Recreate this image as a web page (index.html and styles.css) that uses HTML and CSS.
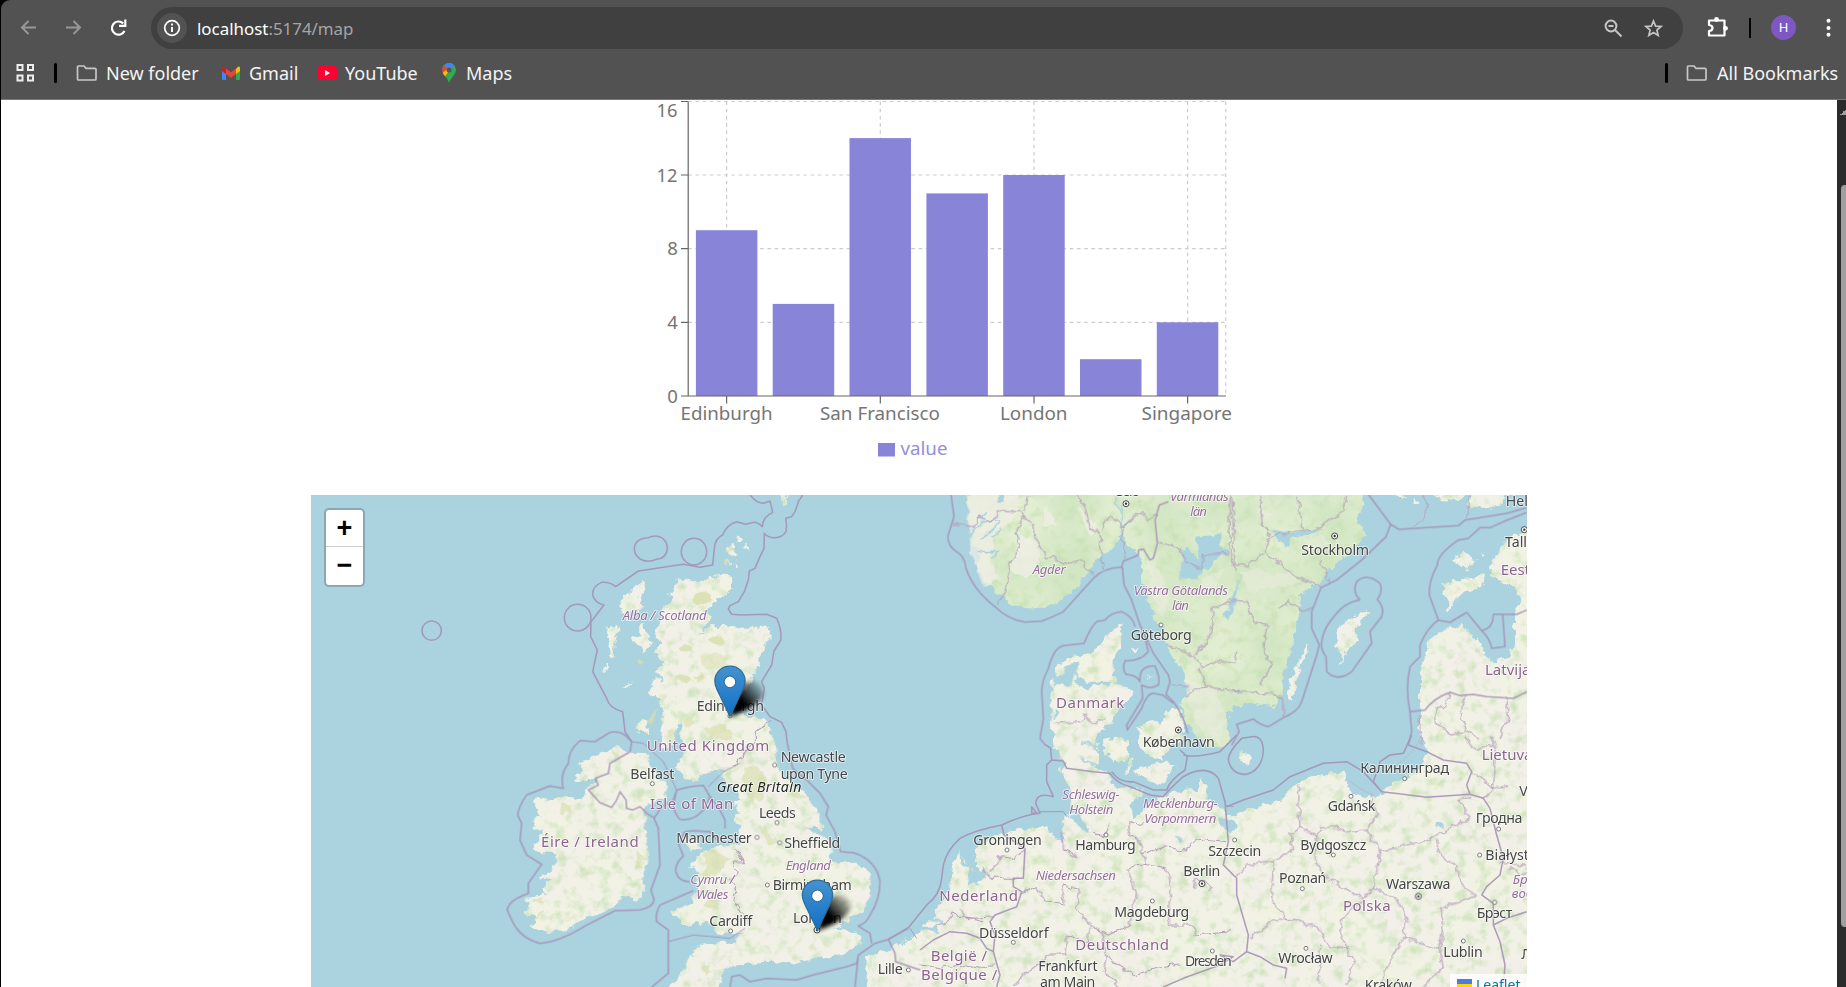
FILE: index.html
```html
<!DOCTYPE html>
<html lang="en">
<head>
<meta charset="utf-8">
<title>localhost:5174/map</title>
<link rel="stylesheet" href="styles.css">
</head>
<body>
<header class="browser">
  <div class="toolbar">
    <svg class="nav-icons" width="150" height="56" viewBox="1 0 150 56" fill="none" stroke-width="2">
      <g stroke="#979797"><path d="M36 27.500H22M28.500 21L22 27.500l6.500 6.500"/><path d="M66 27.500h14M73.500 21L80 27.500l-6.500 6.500"/></g>
      <path d="M124.500 31a6.600 6.600 0 1 1-1.300-7.600M125.300 19.500v6.300H119" stroke="#fff" stroke-width="2.200"/>
    </svg>
    <div class="omnibox">
      <span class="info"><svg width="30" height="30" viewBox="0 0 30 30"><circle cx="15" cy="15" r="7.300" fill="none" stroke="#fff" stroke-width="1.700"/><path d="M15 14v5M15 10.500v2" stroke="#fff" stroke-width="1.900"/></svg></span>
      <span class="url"><b>localhost</b>:5174/map</span>
      <svg class="omni-icons" width="60" height="30" viewBox="1604 13 60 30" fill="none" stroke="#c4c4c4" stroke-width="2">
        <circle cx="1611" cy="26" r="5.400"/><path d="M1615 30l6.500 6.500M1608.500 26h5" />
        <path stroke-width="1.700" d="M1653.500 21l2.100 5.100 5.500.4-4.200 3.600 1.300 5.400-4.700-2.900-4.700 2.900 1.300-5.400-4.200-3.600 5.500-.4z"/>
      </svg>
    </div>
    <svg class="tool-icons" width="163" height="56" viewBox="1683 0 163 56">
      <path d="M1709 20.500h15.500v15h-15.500v-4.500q3.500-.3 3.500-3t-3.500-3z" fill="none" stroke="#fff" stroke-width="2.200" stroke-linejoin="round"/>
      <circle cx="1716.500" cy="19.500" r="2.400" fill="#fff"/><circle cx="1725.500" cy="28.300" r="2.400" fill="#fff"/>
      <path d="M1750 18v20" stroke="#000" stroke-width="2"/>
      <circle cx="1783.500" cy="27.500" r="12.500" fill="#7e57c2"/>
      <text x="1783.500" y="32.300" text-anchor="middle" class="avatar">H</text>
      <g fill="#fff"><circle cx="1828.500" cy="20.700" r="2"/><circle cx="1828.500" cy="28" r="2"/><circle cx="1828.500" cy="34.800" r="2"/></g>
    </svg>
  </div>
  <nav class="bookmarks">
    <svg class="apps" width="20" height="20" viewBox="0 0 20 20" fill="none" stroke="#eee" stroke-width="2"><path d="M2.500 2h5v5h-5zM13 2h5v5h-5zM2.500 12.500h5v5h-5zM13 12.500h5v5h-5z"/></svg>
    <i class="divider"></i>
    <span class="mark folder"><svg width="22" height="18" viewBox="0 0 22 18"><path d="M1.500 15V3q0-1 1-1H8l2 2.300h9q1 0 1 1V15q0 1-1 1H2.500q-1 0-1-1z" fill="none" stroke="#c7c7c7" stroke-width="1.700"/></svg>New folder</span>
    <span class="mark gmail"><svg width="18" height="14" viewBox="0 0 18 14"><path d="M0 3h4v11H1.200Q0 14 0 12.800z" fill="#4285f4"/><path d="M14 3h4v9.800q0 1.200-1.200 1.200H14z" fill="#34a853"/><path d="M14 3l2-2.300q2-.9 2 1.300v3l-4 3z" fill="#fbbc04"/><path d="M4 2.500L9 6.300l5-3.800V8l-5 3.800L4 8z" fill="#ea4335"/><path d="M0 2Q0-.2 2 .7l2 1.800V8L0 5z" fill="#c5221f"/></svg>Gmail</span>
    <span class="mark youtube"><svg width="20" height="14" viewBox="0 0 20 14"><rect width="20" height="14" rx="3.500" fill="#ff0033"/><path d="M8 4l5 3-5 3z" fill="#fff"/></svg>YouTube</span>
    <span class="mark maps"><svg width="14" height="20" viewBox="0 0 14 20"><path d="M7 0a7 7 0 0 1 7 7q0 3-3 6.500T7 20q-1-4-4-7T0 7a7 7 0 0 1 7-7z" fill="#34a853"/><path d="M1.500 2.700A7 7 0 0 1 12.300 2.500L8 6z" fill="#4285f4"/><path d="M1.500 2.700L6 6 .8 10Q-.9 6 1.500 2.700z" fill="#ea4335"/><path d="M.8 10L6 5l5-2.500L3.200 13.200Q1.600 12 .8 10z" fill="#fbbc04"/><path d="M4 3.500L7 0q3 0 5.300 2.500L9 6z" fill="#4285f4"/><circle cx="7" cy="7" r="2.500" fill="#555"/></svg>Maps</span>
    <i class="divider end"></i>
    <span class="mark all"><svg width="22" height="18" viewBox="0 0 22 18"><path d="M1.500 15V3q0-1 1-1H8l2 2.300h9q1 0 1 1V15q0 1-1 1H2.500q-1 0-1-1z" fill="none" stroke="#c7c7c7" stroke-width="1.700"/></svg>All Bookmarks</span>
  </nav>
</header>
<div class="viewport">
<main class="page">
  <svg class="chart" width="620" height="395" viewBox="640 100 620 395">
    <g class="grid">
      <path d="M688.200 322.300H1226M688.200 248.600H1226M688.200 175H1226M688.200 101.500H1226"/>
      <path d="M726.600 101.500V396M880.300 101.500V396M1034 101.500V396M1187.600 101.500V396M1225.700 101.500V396"/>
    </g>
    <g fill="#8884d8">
      <rect x="695.900" y="230.200" width="61.500" height="165.800"/>
      <rect x="772.700" y="303.900" width="61.500" height="92.100"/>
      <rect x="849.500" y="138.100" width="61.500" height="257.900"/>
      <rect x="926.400" y="193.400" width="61.500" height="202.600"/>
      <rect x="1003.200" y="175" width="61.500" height="221"/>
      <rect x="1080" y="359.200" width="61.500" height="36.800"/>
      <rect x="1156.800" y="322.300" width="61.500" height="73.700"/>
    </g>
    <path class="axis" d="M688.200 101.500V396H1226M681 101.500h7M681 175h7M681 248.600h7M681 322.300h7M681 396h7M726.600 396v7.500M880.300 396v7.500M1034 396v7.500M1187.600 396v7.500"/>
    <g class="tick">
      <text x="656.500" y="116.700" textLength="21" lengthAdjust="spacingAndGlyphs">16</text><text x="656.500" y="181.700" textLength="21" lengthAdjust="spacingAndGlyphs">12</text><text x="667.300" y="255.300">8</text><text x="667.300" y="329.300">4</text><text x="667.300" y="402.700">0</text>
      <text x="680.500" y="419.700" textLength="92" lengthAdjust="spacingAndGlyphs">Edinburgh</text>
      <text x="820" y="419.700" textLength="120" lengthAdjust="spacingAndGlyphs">San Francisco</text>
      <text x="1000" y="419.700" textLength="67.500" lengthAdjust="spacingAndGlyphs">London</text>
      <text x="1141.500" y="419.700" textLength="90.500" lengthAdjust="spacingAndGlyphs">Singapore</text>
    </g>
    <rect x="878" y="443" width="17" height="13.500" fill="#8884d8"/>
    <text class="legend" x="900.500" y="454.700" textLength="47" lengthAdjust="spacingAndGlyphs">value</text>
  </svg>
  <section class="map">
  <svg class="tiles" width="1216" height="492" viewBox="311 495 1216 492">
    <defs>
      <filter id="terrain" filterUnits="userSpaceOnUse" x="311" y="480" width="1216" height="520" color-interpolation-filters="sRGB">
        <feTurbulence type="fractalNoise" baseFrequency=".13" numOctaves="3" seed="4" result="n"/>
        <feDisplacementMap in="SourceGraphic" in2="n" scale="9" xChannelSelector="R" yChannelSelector="G" result="land"/>
        <feTurbulence type="fractalNoise" baseFrequency=".09" numOctaves="5" seed="11"/>
        <feColorMatrix values="0 0 0 0 .78  0 0 0 0 .88  0 0 0 0 .70  0 3 0 0 -1.450" result="g"/>
        <feComposite in="g" in2="land" operator="in" result="green"/>
        <feTurbulence type="fractalNoise" baseFrequency=".02" numOctaves="2" seed="5"/>
        <feColorMatrix values="0 0 0 0 .94  0 0 0 0 .96  0 0 0 0 .87  0 2 0 0 -.500" result="w"/>
        <feComposite in="w" in2="land" operator="in" result="wash"/>
        <feComponentTransfer in="wash" result="pale"><feFuncA type="linear" slope=".55"/></feComponentTransfer>
        <feComponentTransfer in="green" result="tint"><feFuncA type="linear" slope=".75"/></feComponentTransfer>
        <feMerge><feMergeNode in="land"/><feMergeNode in="pale"/><feMergeNode in="tint"/></feMerge>
      </filter>
      <filter id="rough" filterUnits="userSpaceOnUse" x="311" y="480" width="1216" height="520">
        <feTurbulence type="fractalNoise" baseFrequency=".12" numOctaves="2" seed="8"/>
        <feDisplacementMap in="SourceGraphic" scale="8" xChannelSelector="R" yChannelSelector="G"/>
      </filter>
      <filter id="shade" x="-50%" y="-50%" width="200%" height="200%"><feGaussianBlur stdDeviation="2"/></filter>
      <linearGradient id="pinfill" x1="0" y1="0" x2="0" y2="1"><stop offset="0" stop-color="#4593cf"/><stop offset="1" stop-color="#126fc6"/></linearGradient>
      <linearGradient id="shadefill" x1="0" y1="1" x2="1" y2="0"><stop offset=".4" stop-color="#000"/><stop offset=".95" stop-color="#000" stop-opacity=".05"/></linearGradient>
      <g id="pin">
        <path d="M0 0L8-32 22-36Q34-34 33-21Q25-8 0 0z" fill="url(#shadefill)" filter="url(#shade)"/>
        <g transform="translate(-15.800 -51) scale(1.260)"><path d="M12.500.5C5.900.5.500 5.600.500 12.200c0 2 .6 4.600 1.600 6.600L12.500 40.300 22.900 18.800c1-2 1.600-4.600 1.600-6.600C24.500 5.600 19.100.500 12.500.500z" fill="url(#pinfill)" stroke="#2e6c97"/><circle cx="12.500" cy="13" r="4.600" fill="#fff" stroke="#2e6c97" stroke-width=".8"/></g>
      </g>
      <g id="cap"><circle r="9" fill="#fff" stroke="#444" stroke-width="3"/><circle r="3.500" fill="#333"/></g>
      <circle id="town" r="6" fill="#fff" stroke="#666" stroke-width="2.500"/>
    </defs>
    <rect x="311" y="495" width="1216" height="492" fill="#aad3df"/>

    <g filter="url(#terrain)" fill="#f2efe9">
      <g transform="translate(580 485) scale(.33333)">
        <path d="M295 272L310 285 325 283 340 292 385 280 430 268 455 272 460 290 455 310 430 330 410 345 395 360 380 385 395 400 375 425 350 455 385 428 430 420 470 425 555 425 570 440 568 460 550 480 545 510 530 550 515 580 500 610 478 640 450 680 500 692 545 705 565 730 580 750 590 790H330L305 710 290 720 275 790H240L255 740 250 690 262 660 240 640 225 625 250 590 250 575 230 560 250 530 225 500 240 470 225 450 230 420 250 400 235 385 260 365 275 350 265 330 285 310z"/>
        <path d="M190 290L197 305 185 330 175 350 190 370 160 375 140 400 130 380 118 350 140 330 165 310zM85 430L110 420 118 440 105 460 100 515 90 515 92 480 80 440zM85 530L90 545 72 560zM178 425L190 420 195 450 220 470 215 490 190 500 180 480 150 470 160 450 178 455zM215 585L240 580 255 610 240 625 200 630 215 610zM185 700L205 705 205 720 200 745 175 735 170 725zM130 610L160 592 140 612zM435 190L460 180 470 210 450 215zM470 150L485 160 475 168zM435 225L452 235 440 243zM467 225L475 250 465 245zM485 185L502 180 505 195zM612 25H620L612 60 605 55z"/>
      </g>
      <g transform="translate(500 700) scale(.33333)">
        <path d="M560 30L720 45 785 60 805 85 820 110 828 160 832 200 855 235 895 265 920 290 945 320 952 345 970 390 950 385 915 378 945 395 970 410 985 425 993 450 990 475 1000 488 1060 485 1100 505 1113 540 1110 590 1085 630 1060 650 1020 675 1000 685 1040 690 1085 710 1078 735 1040 760 980 770 930 780 860 790 800 785 740 790 690 800 665 820 655 870H500L545 825 575 765 600 735 640 728 700 728 735 690 700 705 650 700 625 665 590 670 550 675 512 635 570 610 600 570 590 540 590 520 600 510 565 500 610 455 650 440 720 430 720 380 705 360 715 330 700 310 725 300 715 280 695 260 670 240 665 215 690 200 640 215 600 225 590 245 545 230 525 200 555 155 545 100zM545 415L590 420 600 445 570 450zM480 0L490 60 480 100 500 112 520 60 550 0z"/>
        <path d="M350 140L385 155 440 160 450 195 495 255 500 290 460 300 430 325 435 360 440 420 440 490 425 540 435 570 420 600 370 590 340 620 290 645 240 660 200 690 140 695 90 680 110 650 75 640 90 615 70 600 100 590 140 585 120 565 160 540 120 535 175 490 170 460 115 455 95 445 130 405 95 370 120 345 105 320 105 290 160 300 190 290 240 300 270 260 290 235 215 240 245 215 235 190 290 165z"/>
      </g>
      <g transform="translate(900 735) scale(.33333)">
        <path d="M-103 770V668L-60 655 0 627 45 600 60 580 100 545 110 520 150 470 155 400 165 370 175 350 200 385 215 410 205 445 235 450 260 430 260 405 230 395 225 350 240 325 290 300 380 280 440 275 455 300 470 310 490 320 485 260 500 240 540 235 515 215 510 160 490 120 495 80 460 30 455 -50 455 -150 470 -200 500 -235 580 -245 620 -300 670 -338 660 -310 660 -260 640 -220 645 -150 695 -140 690 -110 650 -80 640 -40 600 -10 590 15 580 45 600 70 580 100 620 110 640 150 700 165 725 160 715 190 690 215 700 250 740 220 780 190 830 170 890 165 905 130 920 150 915 190 960 215 985 240 1005 240 1050 225 1140 195 1190 150 1230 125 1330 110 1345 140 1340 165 1380 185 1435 185 1485 140 1530 125 1570 80 1580 50 1570 30 1560 -30 1560 -150 1565 -205 1585 -270 1600 -300 1650 -320 1680 -335 1720 -300 1745 -260 1775 -220 1820 -230 1845 -270 1845 -360 1860 -420 1840 -440 1810 -460 1775 -470 1770 -510 1795 -550 1810 -580 1860 -610 1910 -620V770z"/>
        <path d="M610 15L640 0 680 15 685 60 660 85 625 65zM715 -20L760 -50 780 -30 800 -70 835 -80 850 -50 855 -10 845 10 815 30 800 50 790 75 740 60 720 30zM700 105L760 90 800 80 830 90 780 150 700 115zM675 110L690 70 697 75 682 125zM1020 45L1055 65 1050 90 1018 75zM695 -258L715 -262 700 -245zM742 -178L760 -175 745 -165zM475 90L485 115 475 110zM560 40L580 30 600 50 590 30z"/>
      </g>
      <g transform="translate(1220 485) scale(.33333)">
        <path d="M260 478L262 500 240 540 215 650 203 640 210 590zM350 430L400 395 450 375 430 400 405 430 410 465 380 500 355 545 365 510 350 480zM670 300L700 285 760 280 795 265 790 300 740 320 700 350 685 385 685 340 668 325zM700 225L730 200 770 225 740 255 715 240 690 222zM780 205L798 207 785 213zM740 60L760 20H860L855 55 800 70zM535 20L560 40 535 36zM580 40L600 55 585 60zM640 25H740L720 45 700 40 680 55z"/>
      </g>
      <g transform="translate(920 485) scale(.33333)" fill="#d2e6c3">
        <path d="M130 5L145 60 150 110 155 180 175 190 180 220 175 260 190 285 235 325 270 355 320 370 370 370 430 345 470 300 510 255 530 220 560 205 580 190 600 150 605 100 612 150 620 180 650 200 665 230 670 290 685 350 700 390 725 430 740 480 760 520 790 560 810 610 790 640 780 660 800 710 830 750 860 785 910 790 930 760 920 700 940 665 1000 655 1065 668 1085 620 1090 560 1115 500 1135 400 1140 330 1200 290 1240 240 1300 190 1340 150 1310 100 1330 60 1320 5z"/>
      </g>
    </g>

    <!-- uplands, lakes, fjords -->
    <g filter="url(#rough)">
      <g transform="translate(580 485) scale(.33333)" fill="#d9dfae" opacity=".85">
        <ellipse cx="368" cy="340" rx="28" ry="20"/><ellipse cx="410" cy="465" rx="24" ry="13"/><ellipse cx="400" cy="530" rx="42" ry="24" opacity=".6"/><ellipse cx="318" cy="492" rx="20" ry="10"/><ellipse cx="310" cy="582" rx="26" ry="10"/><ellipse cx="362" cy="578" rx="15" ry="9"/><path d="M235 668L225 710 208 718 212 695zM265 740l15-10 8 20-12 18zM310 700l25-5 10 20-25 10zM370 725l60-5 30 20-20 25-50-5z" opacity=".8"/>
        <circle cx="182" cy="532" r="8"/><circle cx="455" cy="192" r="8"/><circle cx="440" cy="233" r="8"/>
      </g>
      <g transform="translate(500 700) scale(.33333)" fill="#d9dfae" opacity=".65">
        <path d="M735 200l35 0 30 40-10 50-30 20-30-40zM780 380l20 10 35 40-20 5-30-30zM600 455l50 0 40 20-40 50-40 10 10-40zM870 270l40 10 10 15-40-5zM330 150l25 5 10 20-20 5zM190 310l30 10-10 20-30 0zM410 455l20 10-5 40-20 0zM95 600l30-5 5 10-30 5zM110 640l20-5-30 30zM610 800l20-5 5 25-20 5zM620 600l40 10-10 15-40-5z"/>
      </g>
      <g transform="translate(920 485) scale(.33333)">
        <g fill="#f2efe9" opacity=".7"><path d="M145 30h160l-20 60-60 60-15 70 30 60-50 30-15-50-20-60-10-110zM300 150l50 20 10 60-40 50-50-20zM380 60l30 60-40 0zM470 60l60 60-20 40z"/><path opacity=".6" d="M790 580l90 30 40 80-20 90-70-60-20-60zM960 260l60-10 40 20 50-10 30 30-60 20-50 0-40 20zM680 230l40 30 30 80-20 60-40-80zM850 280l60-30-20 60-60 20zM1000 60l60 30-30 20zM1150 170l60-20 20 30-60 20z"/></g>
        <g fill="#aad3df"><path d="M830 155L900 148 905 180 925 200 880 230 865 260 850 250 830 285 800 275 780 285 790 200 800 190 835 230zM910 390L945 320 965 260 945 360 920 405zM1050 130l60 15 60-15 40 0-40 20-60 10-10 30zM430 545l40-10 10 50-20-20-10 40-20-10-30 10 0-30 30 0zM460 590l30-15 10 15 75 0-10 12-50-2-15 10-20-10zM570 725l60-10-20 40-40 10zM400 675l15 10-10 20zM230 30l22 0-2 20-15 0z"/></g>
        <g fill="none" stroke="#aad3df" stroke-width="5"><path d="M150 150l40-40 50-5-20 30-40 30M175 200l60 0-20 20M285 140l10 20M180 100l20-20M605 60l0 50M585 40l20 50M250 125l-30 30M600 130l30-20"/></g>
      </g>
      <g transform="translate(900 735) scale(.33333)" fill="#aad3df">
        <path d="M180 360l35 40 15 20 20 10-40 20-5-50-25-20zM60 575l50 0 10 15-60-5zM80 545l50 15 0 8-50-15zM500 240l40 0 30 50-10 0zM825 305l25 15-8 8zM955 250l40 0 15 20-15 25-20-15zM1610 265l15-5 5 12-15 5z"/>
        <path d="M540 20l40 10 0 10M545 70l50 30" stroke="#aad3df" stroke-width="6" fill="none"/>
      </g>
    </g>

    <!-- provincial lines -->
    <g fill="none" stroke="#b49dbb" stroke-width="3.200" stroke-linejoin="round" filter="url(#rough)">
      <path transform="translate(500 700) scale(.33333)" d="M700 445L718 460 730 488 700 490 710 520 695 540 708 570 700 610 735 640M700 195L720 180 750 140 770 110 765 95 810 60"/>
      <path transform="translate(920 485) scale(.33333)" d="M100 118L165 125 180 95 215 110 240 80 300 80 315 95 340 120 350 170 380 215 450 235 480 225 520 270M315 95L285 145 300 180 270 240 260 310 230 360M310 80L325 40M470 30L495 60 510 130 540 145 543 210 550 250M545 135L560 100 585 100 605 130 610 180 615 225M605 130L655 80 690 105 715 90M930 30V200L945 260M715 170L780 185 800 230 845 250 850 210 925 205M820 510L870 460 880 370 940 345M740 480L800 500 850 545 890 530 945 535 950 500M840 550L855 605 800 630M855 605L960 620M750 600L800 605M935 30L945 240 990 240 1035 200 1045 160 1130 135 1190 130M1020 30L1030 120 1050 150M1280 30L1270 80 1190 130M1130 30L1150 130M1200 230L1230 290M1040 205L1130 275 1200 305M980 350L1000 410 1040 420 1030 500 1055 545 1020 600M940 345L980 350M1075 370L1100 350 1140 372 1180 372M940 620L1060 625 1088 640V695M410 715L480 710 500 690 520 715 560 700"/>
      <path transform="translate(1220 485) scale(.33333)" d="M605 30L625 60 610 100 580 128M750 30L740 100M690 622L680 660 650 670 650 710 690 750 740 735M735 630L725 690 740 740 780 760M860 635L865 700 840 760M600 690L605 780"/>
      <path transform="translate(900 735) scale(.33333)" d="M180 520L190 545 230 550 280 545M110 575L160 540 250 560M270 410L300 365 340 370 375 340M250 400L270 430 340 430M360 475L410 455 440 500 490 510 485 450 540 460 530 520 570 570 560 620 500 600 495 660 440 660 420 690 380 710 340 756M570 570L620 600 690 570 700 510 710 480 680 400 740 385 800 400 810 450 805 570 870 570 890 600 990 590M740 385L730 360 790 335 850 345 900 310 980 320M730 270L690 260 680 300 720 320 730 360M615 300L630 270 610 305 580 295M490 290V340L530 370 525 355 490 345M595 575L620 660 700 720 770 700 840 690M620 660L610 710 660 756M880 465L885 430 930 450 925 465M60 690L130 700 180 690 240 700 290 690"/>
      <path transform="translate(1210 735) scale(.33333)" d="M265 150L270 280 240 300 250 340 190 380 110 390 75 430M190 380L185 500 230 550 330 580 350 630 410 640 390 590 400 545 460 490 350 430 315 380 320 300 270 280M320 300L360 270 410 290 470 285 510 350 640 320 780 250 750 195M470 285L500 240 480 185M510 350L490 460 460 490M490 460L560 490 590 550 580 610 690 640 700 560 690 520 800 480 755 450 740 390 685 355 680 315M580 610L540 680 510 756M690 640L700 700 640 756M240 550L190 555 120 610M330 630L325 740M410 640L430 680 410 756M780 180L740 200M785 110L850 160 900 150M820 190L850 165 860 50 840 0M870 385L950 390M900 400L950 420M760 0L790 40 850 30"/>
    </g>

    <!-- national and maritime limits -->
    <g fill="none" stroke="#a590b6" stroke-width="4.600" stroke-linejoin="round" opacity=".88">
      <g transform="translate(580 485) scale(.33333)">
        <path d="M668 30L655 50 645 80 635 95 617 100Q622 120 618 140Q605 160 580 158Q560 155 553 145L552 190 540 215 525 250 508 258 505 285 493 320 475 350 450 362 445 372 455 388 480 390 560 388 590 400Q605 430 603 465L582 498 575 540 545 590 553 610 545 660 570 695 605 712 618 740 622 775"/>
        <path d="M510 30Q530 55 550 55L570 48 578 82Q548 95 547 125Q530 108 515 113L497 118 470 110Q440 118 428 150Q405 160 403 190L398 240 360 247 310 238 175 258 107 305Q90 290 65 292Q35 305 38 330Q45 355 72 360L33 410 32 455 52 495 38 560 80 640Q88 670 128 680L135 740 155 770"/>
        <path d="M205 158Q225 148 245 158Q262 170 262 190Q260 220 230 223Q200 235 180 222Q163 210 163 190Q165 160 205 158z"/><ellipse cx="342" cy="200" rx="38" ry="40"/><circle cx="-7" cy="398" r="40"/><circle cx="-445" cy="437" r="29"/>
      </g>
      <g transform="translate(500 700) scale(.33333)">
        <path d="M862 130L878 205 920 240 960 280 985 320 978 345 1005 395 1022 455 1060 458Q1130 480 1140 545Q1140 600 1110 645Q1100 670 1075 678L1110 700 1115 730M395 125L375 105Q350 90 330 97L285 125 240 122Q205 150 205 190Q178 225 190 265L150 258 80 285Q55 320 53 345L65 370 60 420 80 465 125 493 85 550 85 580Q25 600 22 630L35 660Q60 715 120 730Q180 725 260 675L345 632 420 630Q460 620 462 600L453 570 480 495 475 385 462 355 485 320 520 300 530 270 570 260 610 256 630 290 610 330Q580 365 540 358Q515 330 522 305L530 270"/>
        <path stroke-width="3" d="M395 125L430 130 490 185 530 270M625 260L670 215 720 190M505 725L580 705 690 715 735 685"/>
        <path d="M630 290L660 330 675 360 675 385M555 395L580 392 630 395 650 420M555 395L535 430 550 468Q525 490 527 515Q535 545 570 545M580 572L480 615Q465 640 470 665L505 690V820L455 861M690 861L695 830 720 825 750 845 800 835 890 840 940 825 1040 800 1070 790 1075 765 1125 730 1165 718 1225 685M1075 765L1065 861M1165 718L1185 760 1187 785 1215 795 1260 810"/>
        <path d="M395 125L390 155 330 190 325 220 285 235 295 255 265 270 300 308 335 322 350 300 360 275 378 300 380 325 398 330 420 320 440 340 465 355"/>
      </g>
      <g transform="translate(920 485) scale(.33333)">
        <path d="M93 28L102 95 83 155Q85 185 110 200Q135 215 138 250Q160 315 225 365Q265 405 315 411L365 408Q400 395 430 380L520 280Q550 248 605 246L610 228 655 210 655 195 670 192 690 225 700 220 712 175 705 105 718 60 745 50M607 246L612 300 635 345 660 420 700 505 745 570 750 590 738 628 760 650Q790 690 803 745M645 425Q640 395 605 380Q570 385 555 405L530 410Q510 430 492 475L430 482Q400 490 385 550Q365 590 365 620L370 700 360 760 375 780M675 460L685 500Q660 530 615 527Q605 550 618 568Q650 570 660 590Q655 550 690 543L705 543Q722 580 715 600Q690 615 665 600L668 640 620 720 622 735 665 670Q680 625 700 625L728 630 760 655"/>
      </g>
      <g transform="translate(1220 485) scale(.33333)">
        <path d="M445 28L512 118 537 133 715 122 735 105 860 85 921 68M512 118L498 155 425 225 350 285 303 308 275 380 275 430 298 480 290 510 245 650Q235 680 190 698L145 725Q120 720 100 702L50 718 57 740 35 780M420 345Q395 320 410 290Q440 262 480 295Q490 320 472 343Q495 370 485 395L450 440 455 475 395 560Q350 592 320 560L318 515Q300 490 305 470Q310 420 370 365Q400 345 420 345M921 82L850 110 810 128 780 128 745 160 715 165Q650 210 652 240Q625 290 628 330L655 405 690 412 740 382 785 437Q820 430 820 388L890 388 921 375M785 437Q810 460 815 490L855 485 848 390M655 405Q620 430 600 480L600 515 570 545Q555 610 570 680L575 740 565 780M570 680L615 675Q640 640 690 622L720 632 760 628 800 635 880 640 921 620"/>
      </g>
      <g transform="translate(900 735) scale(.33333)">
        <path d="M435 28L452 40 455 75 440 90 440 140 460 185Q410 170 407 205L420 235Q370 240 305 270Q225 285 180 310Q140 345 130 390L125 430Q120 480 80 510L25 578-35 613M395 215L410 235 395 235zM455 75L490 78 500 100 580 110 630 115Q650 145 690 155L750 180 790 185Q810 160 850 125Q920 85 955 130L975 200 985 320 970 390 1010 430 1010 480 1045 600 1040 650M635 110Q660 145 700 140L760 165 800 165Q810 135 855 105L862 65 840 45M850 60Q880 70 960 50L1010 0M305 270L312 300 375 340 370 430 340 430 340 455 365 470 350 515 285 540 270 560 285 600 280 650 300 720 290 756M60 645L100 615 150 590 200 595 240 610 260 640 280 650M1040 650L1080 665 1120 690 1160 700 1155 730M1040 650L1000 680 960 660 1000 665 960 690 850 730 790 756"/>
        <path stroke-width="3" d="M420 230L490 230 500 245M30 580L50 610M1000 215L975 210"/>
      </g>
      <g transform="translate(1210 735) scale(.33333)">
        <path d="M50 215L100 195 190 165 240 125 340 85 410 80 460 110 515 170 650 187 780 178M490 140L510 80 540 60 580 55 605 0M490 140L515 170M595 30L650 50 700 75 770 85 785 110 770 150 780 178 820 190 840 220 860 300 880 370 870 420 830 455 815 480 850 505 850 570 870 620 885 690 880 756M850 570L890 550 950 530M95 10Q55 50 55 75Q65 120 110 118Q155 105 160 50Q160 0 125 5z"/>
        <path stroke-width="2.500" stroke="#b8b5c6" d="M410 130Q440 160 490 180M560 90Q610 60 635 0"/>
      </g>
    </g>

    <!-- settlements -->
    <g transform="translate(500 700) scale(.33333)"><use href="#town" x="690" y="48"/><use href="#town" x="824" y="195"/><use href="#town" x="457" y="251"/><use href="#town" x="831" y="368"/><use href="#town" x="771" y="412"/><use href="#town" x="839" y="428"/><use href="#town" x="802" y="555"/><use href="#town" x="692" y="693"/><use href="#cap" x="951" y="690"/><use href="#town" x="1225" y="810"/></g>
    <g transform="translate(920 485) scale(.33333)"><use href="#cap" x="618" y="56"/><use href="#town" x="723" y="420"/><use href="#cap" x="775" y="735"/><use href="#cap" x="1244" y="153"/><use href="#cap" x="1813" y="134"/></g>
    <g transform="translate(900 735) scale(.33333)"><use href="#town" x="321" y="345"/><use href="#town" x="618" y="300"/><use href="#cap" x="906" y="446"/><use href="#town" x="757" y="498"/><use href="#town" x="340" y="622"/><use href="#town" x="937" y="648"/></g>
    <g transform="translate(1210 735) scale(.33333)"><use href="#town" x="584" y="131"/><use href="#town" x="423" y="184"/><use href="#town" x="866" y="282"/><use href="#town" x="74" y="315"/><use href="#town" x="370" y="360"/><use href="#town" x="809" y="360"/><use href="#town" x="277" y="461"/><use href="#cap" x="625" y="484"/><use href="#town" x="854" y="502"/><use href="#town" x="760" y="618"/><use href="#town" x="288" y="640"/></g>

    <g class="labels">
      <g transform="translate(580 485) scale(.33333)"><text class="region" x="128" y="404" textLength="252">Alba / Scotland</text></g>
      <g transform="translate(500 700) scale(.33333)">
        <text x="590" y="34" textLength="202">Edinburgh</text><text class="country" x="440" y="153" textLength="368">United Kingdom</text>
        <text x="842" y="186" textLength="195">Newcastle</text><text x="842" y="236" textLength="201">upon Tyne</text><text x="391" y="236" textLength="132">Belfast</text>
        <text class="island" x="650" y="276" textLength="254">Great Britain</text><text class="country" x="450" y="326" textLength="250">Isle of Man</text>
        <text x="777" y="353" textLength="110">Leeds</text><text x="529" y="428" textLength="226">Manchester</text><text x="853" y="444" textLength="168">Sheffield</text>
        <text class="region" x="857" y="509" textLength="136">England</text><text class="country" x="123" y="440" textLength="293">Éire / Ireland</text>
        <text class="region" x="571" y="552" textLength="132">Cymru /</text><text class="region" x="589" y="597" textLength="96">Wales</text>
        <text x="818" y="571" textLength="237">Birmingham</text><text x="628" y="679" textLength="129">Cardiff</text><text x="879" y="668" textLength="146">London</text><text x="1133" y="823" textLength="75">Lille</text>
      </g>
      <g transform="translate(920 485) scale(.33333)">
        <text x="582" y="34" textLength="78">Oslo</text><text class="region" x="750" y="48" textLength="176">Värmlands</text><text class="region" x="811" y="92" textLength="50">län</text>
        <text class="region" x="338" y="268" textLength="99">Agder</text><text class="region" x="641" y="330" textLength="283">Västra Götalands</text><text class="region" x="756" y="375" textLength="51">län</text>
        <text x="632" y="466" textLength="183">Göteborg</text><text class="country" x="408" y="670" textLength="205">Danmark</text><text x="668" y="786" textLength="216">København</text>
        <text x="1144" y="209" textLength="203">Stockholm</text><text x="1757" y="64">Helsinki</text><text x="1755" y="187">Tallinn</text>
        <text class="country" x="1742" y="270">Eesti</text><text class="country" x="1695" y="571">Latvija</text>
      </g>
      <g transform="translate(900 735) scale(.33333)">
        <text class="region" x="487" y="191" textLength="172">Schleswig-</text><text class="region" x="508" y="236" textLength="132">Holstein</text>
        <text class="region" x="729" y="219" textLength="224">Mecklenburg-</text><text class="region" x="733" y="263" textLength="216">Vorpommern</text>
        <text x="220" y="330" textLength="205">Groningen</text><text x="526" y="345" textLength="181">Hamburg</text><text class="region" x="407" y="436" textLength="241">Niedersachsen</text>
        <text x="850" y="422" textLength="111">Berlin</text><text class="country" x="118" y="499" textLength="236">Nederland</text><text x="643" y="546" textLength="225">Magdeburg</text>
        <text x="237" y="608" textLength="209">Düsseldorf</text><text class="country" x="526" y="645" textLength="281">Deutschland</text><text class="country" x="92" y="678" textLength="169">België /</text><text class="country" x="63" y="734" textLength="229">Belgique /</text>
        <text x="415" y="707" textLength="178">Frankfurt</text><text x="420" y="756" textLength="166">am Main</text><text x="855" y="694" textLength="140">Dresden</text>
      </g>
      <g transform="translate(1210 735) scale(.33333)">
        <text x="451" y="115" textLength="266">Калининград</text><text class="country" x="815" y="76">Lietuva</text><text x="353" y="229" textLength="143">Gdańsk</text><text x="928" y="183">Vilnius</text>
        <text x="797" y="263" textLength="140">Гродна</text><text x="-5" y="362" textLength="159">Szczecin</text><text x="271" y="344" textLength="198">Bydgoszcz</text><text x="826" y="374">Białystok</text>
        <text x="207" y="445" textLength="142">Poznań</text><text x="528" y="462" textLength="193">Warszawa</text><text class="country" x="399" y="529" textLength="143">Polska</text>
        <text class="region" x="908" y="446">Брэсцкая</text><text class="region" x="905" y="490">вобласць</text><text x="800" y="550" textLength="107">Брэст</text><text x="700" y="667" textLength="118">Lublin</text>
        <text x="205" y="683" textLength="163">Wrocław</text><text x="464" y="764" textLength="142">Kraków</text><text x="934" y="672">Луцьк</text>
      </g>
    </g>
    <use href="#pin" x="730" y="716.500"/><use href="#pin" x="817.500" y="930.500"/>
  </svg>
  <div class="zoom-control"><button>+</button><button>−</button></div>
  <div class="attribution"><svg width="15" height="10" viewBox="0 0 15 10"><path fill="#4c7be1" d="M0 0h15v5H0z"/><path fill="#ffd500" d="M0 5h15v5H0z"/></svg>Leaflet</div>
  </section>
</main>
<aside class="scrollbar"><i class="up"></i><i class="thumb"></i></aside>
</div>
</body>
</html>
```
FILE: styles.css
```css
* { box-sizing: border-box; }
body { margin: 0; width: 1846px; height: 987px; overflow: hidden; background: #000; font-family: "Noto Sans", "Open Sans", sans-serif; }
svg { display: block; flex: none; }
.browser { height: 100px; margin-left: 1px; background: #525252; border-bottom: 1px solid #7c7879; border-top-left-radius: 9px; overflow: hidden; }
.toolbar { display: flex; height: 56px; align-items: center; }
.omnibox { display: flex; align-items: center; flex: none; width: 1532px; height: 42px; padding: 0 19px 0 6px; border-radius: 21px; background: #404040; }
.info { width: 30px; height: 30px; border-radius: 50%; background: #525252; }
.url { margin-left: 10px; font-size: 16.900px; color: #a5a5a5; }
.url b { font-weight: 400; color: #fff; }
.omni-icons { margin-left: auto; }
.avatar { font-size: 13px; fill: #fff; }
.bookmarks { display: flex; height: 35px; align-items: center; font-size: 18px; line-height: 24px; color: #f4f4f4; padding: 0 9px 1px 14px; }
.mark { display: flex; align-items: center; gap: 9px; white-space: nowrap; flex: none; }
.divider { width: 3px; height: 20px; border-radius: 2px; background: #000; margin-left: 19px; }
.folder { margin-left: 19px; width: 146px; gap: 8px; }
.gmail { width: 95px; }
.youtube { width: 125px; gap: 8px; }
.maps { gap: 10px; }
.divider.end { margin-left: auto; margin-right: 18px; }
.all { width: 151px; }
.viewport { display: flex; height: 887px; margin-left: 1px; background: #fff; }
.page { display: flex; flex-direction: column; width: 1836px; }
.chart { margin-left: 639px; }
.grid path { fill: none; stroke: #ccc; stroke-width: 1.200; stroke-dasharray: 3.600 3.600; }
.axis { fill: none; stroke: #666; stroke-width: 1.200; }
.tick, .legend { font-family: "Noto Sans", "Open Sans", sans-serif; font-size: 18.500px; fill: #757575; }
.legend { fill: #938fdb; }
.map { position: relative; width: 1216px; height: 492px; margin-left: 310px; overflow: hidden; }
.labels { font-size: 42.500px; fill: #444; stroke: #fff; stroke-opacity: .7; stroke-width: 5px; stroke-linejoin: round; paint-order: stroke; }
.country { font-size: 45px; fill: #8b638e; }
.region { font-size: 39.500px; font-style: italic; fill: #956e9b; }
.island { font-size: 42.500px; font-style: italic; fill: #222; }
.zoom-control { position: absolute; left: 13px; top: 13px; width: 41px; height: 79px; border: 2px solid rgba(0,0,0,.2); border-radius: 5px; background: #fff; background-clip: padding-box; display: flex; flex-direction: column; }
.zoom-control button { height: 36px; border: 0; padding: 0; background: none; color: #000; font: bold 27px/34px "Liberation Sans", sans-serif; }
.zoom-control button:first-child { height: 37px; border-bottom: 1px solid #ccc; }
.attribution { position: absolute; right: 0; bottom: -7px; display: flex; align-items: center; gap: 4px; height: 20px; width: 77px; padding-left: 7px; background: rgba(255,255,255,.8); color: #0078a8; font-size: 14px; }
.scrollbar { display: flex; flex-direction: column; align-items: flex-end; width: 9px; background: #2b2b2b; overflow: hidden; }
.up { width: 6px; height: 6px; margin-top: 9px; background: linear-gradient(135deg, transparent 50%, #a0a0a0 50%); }
.thumb { width: 5px; height: 742px; margin-top: 70px; border-top-left-radius: 4px; border-bottom-left-radius: 4px; background: #9f9f9f; }
```
